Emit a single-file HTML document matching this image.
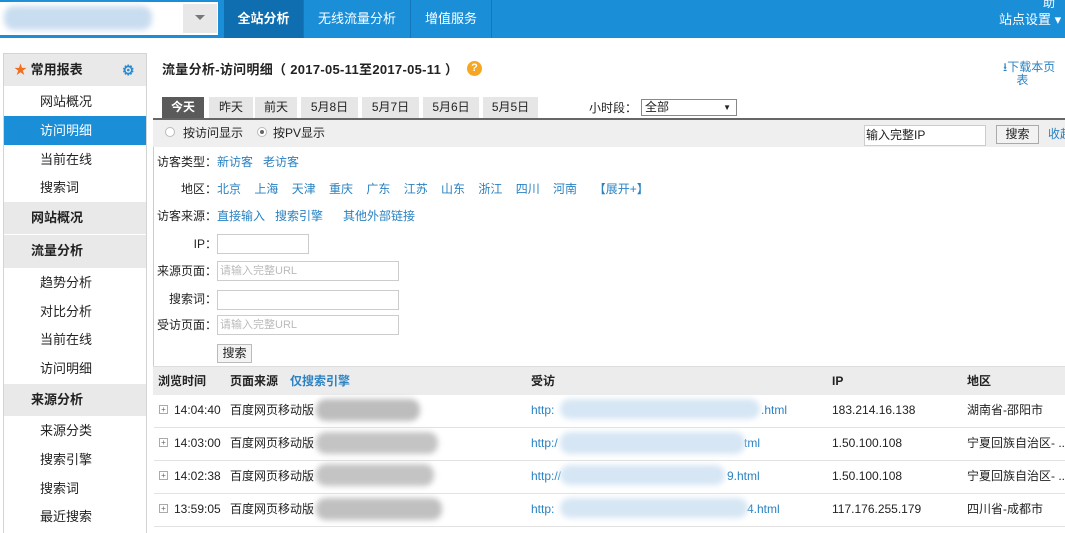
<!DOCTYPE html>
<html><head><meta charset="utf-8"><style>
*{margin:0;padding:0;box-sizing:border-box}
body{width:1065px;height:524px;overflow:hidden;background:#fff;font-family:"Liberation Sans","Noto Sans CJK SC",sans-serif;font-size:12px;color:#222;position:relative}
.a{position:absolute;white-space:nowrap}
.top{position:absolute;left:0;top:0;width:1065px;height:38px;background:#1b8ed8}
.nav{position:absolute;top:0;height:38px;line-height:37px;color:#fff;font-size:13px;text-align:center;border-right:1px solid #1577bb}
.side{position:absolute;left:3px;top:53px;width:144px;height:480px;border:1px solid #d4d4d4;border-bottom:none}
.si{position:absolute;left:0;width:142px;height:29px;line-height:29px;padding-left:36px;font-size:13px}
.sh{background:#e9e9e9;font-weight:bold;padding-left:27px;height:32px;line-height:32px}
.lnk{color:#2a82c2}
.tab{position:absolute;top:97px;height:21px;line-height:21px;background:#e6e6e6;text-align:center;font-size:12px}
.inp{position:absolute;height:20px;border:1px solid #ccc;background:#fff;color:#bbb;font-size:11px;line-height:18px;padding-left:2px}
.lbl{position:absolute;width:64px;text-align:right;left:153px;line-height:14px}
.row{position:absolute;left:154px;width:911px;height:33px;border-bottom:1px solid #e2e2e2;font-size:12px}
.row span{position:absolute;top:8px;line-height:14px}
.blur{position:absolute;border-radius:10px;filter:blur(3px)}
</style></head><body>
<div class="top"></div>
<div class="a" style="left:0;top:2px;width:218px;height:33px;background:#fff"></div>
<div class="blur" style="left:4px;top:6px;width:148px;height:24px;background:#c9ddf0"></div>
<div class="a" style="left:183px;top:4px;width:34px;height:29px;background:#e8e8e8"></div>
<div class="a" style="left:195px;top:15px;width:0;height:0;border-left:5px solid transparent;border-right:5px solid transparent;border-top:5px solid #777"></div>
<div class="nav" style="left:224px;width:80px;background:#0f6eaf;font-weight:bold">全站分析</div>
<div class="nav" style="left:304px;width:107px">无线流量分析</div>
<div class="nav" style="left:411px;width:81px">增值服务</div>
<div class="a" style="left:1043px;top:-6px;color:#fff;font-size:12px">助</div>
<div class="a" style="left:999px;top:9px;color:#fff;font-size:13px">站点设置 ▾</div>

<div class="side">
<div class="si sh" style="top:0;padding-left:10px"><span style="color:#f07020">★</span> 常用报表<span style="position:absolute;left:118px;color:#2a8ad0;font-size:14px">⚙</span></div>
<div class="si" style="top:33px">网站概况</div>
<div class="si" style="top:62px;background:#1b8ed8;color:#fff">访问明细</div>
<div class="si" style="top:91px">当前在线</div>
<div class="si" style="top:119px">搜索词</div>
<div class="si sh" style="top:148px">网站概况</div>
<div class="si sh" style="top:181px;height:33px">流量分析</div>
<div class="si" style="top:214px">趋势分析</div>
<div class="si" style="top:243px">对比分析</div>
<div class="si" style="top:271px">当前在线</div>
<div class="si" style="top:300px">访问明细</div>
<div class="si sh" style="top:330px">来源分析</div>
<div class="si" style="top:362px">来源分类</div>
<div class="si" style="top:391px">搜索引擎</div>
<div class="si" style="top:420px">搜索词</div>
<div class="si" style="top:448px">最近搜索</div>
</div>

<div class="a" style="left:162px;top:59px;font-size:13px;font-weight:bold;letter-spacing:0.3px">流量分析-访问明细（ 2017-05-11至2017-05-11 ）</div>
<div class="a" style="left:467px;top:61px;width:15px;height:15px;border-radius:50%;background:#f5a623;color:#fff;font-size:11px;text-align:center;line-height:15px;font-weight:bold">?</div>
<div class="a lnk" style="left:1003px;top:61px;font-size:12px;line-height:13px">⭳下载本页<br>&nbsp;&nbsp;&nbsp;&nbsp;表</div>

<div class="tab" style="left:162px;width:42px;background:#5a5a5a;color:#fff;font-weight:bold">今天</div>
<div class="tab" style="left:209px;width:44px">昨天</div>
<div class="tab" style="left:255px;width:42px">前天</div>
<div class="tab" style="left:301px;width:57px">5月8日</div>
<div class="tab" style="left:362px;width:57px">5月7日</div>
<div class="tab" style="left:423px;width:56px">5月6日</div>
<div class="tab" style="left:483px;width:55px">5月5日</div>
<div class="a" style="left:589px;top:99px">小时段：</div>
<div class="a" style="left:641px;top:99px;width:96px;height:17px;border:1px solid #888;background:#fff;line-height:15px;padding-left:3px">全部<span style="position:absolute;right:5px;font-size:8px">▼</span></div>

<div class="a" style="left:153px;top:118px;width:912px;height:29px;background:#efefef;border-top:2px solid #666"></div>
<div class="a" style="left:165px;top:127px;width:10px;height:10px;border-radius:50%;border:1px solid #bbb;background:#fff"></div>
<div class="a" style="left:183px;top:126px;line-height:14px">按访问显示</div>
<div class="a" style="left:257px;top:127px;width:10px;height:10px;border-radius:50%;border:1px solid #bbb;background:#fff"><div style="margin:2px;width:4px;height:4px;border-radius:50%;background:#666"></div></div>
<div class="a" style="left:273px;top:126px;line-height:14px">按PV显示</div>
<div class="a" style="left:864px;top:125px;width:122px;height:21px;border:1px solid #ccc;background:#fff;line-height:19px;padding-left:1px">输入完整IP</div>
<div class="a" style="left:996px;top:125px;width:43px;height:19px;border:1px solid #aaa;background:#f2f2f2;text-align:center;line-height:17px">搜索</div>
<div class="a lnk" style="left:1048px;top:127px;line-height:14px">收起</div>

<div class="a" style="left:153px;top:147px;width:1px;height:220px;background:#ccc"></div>
<div class="a" style="left:157px;top:155px;line-height:14px">访客类型：<span class="lnk">新访客</span>&nbsp;&nbsp;&nbsp;<span class="lnk">老访客</span></div>
<div class="a" style="left:181px;top:182px;line-height:14px">地区：<span class="lnk">北京&nbsp;&nbsp;&nbsp;&nbsp;上海&nbsp;&nbsp;&nbsp;&nbsp;天津&nbsp;&nbsp;&nbsp;&nbsp;重庆&nbsp;&nbsp;&nbsp;&nbsp;广东&nbsp;&nbsp;&nbsp;&nbsp;江苏&nbsp;&nbsp;&nbsp;&nbsp;山东&nbsp;&nbsp;&nbsp;&nbsp;浙江&nbsp;&nbsp;&nbsp;&nbsp;四川&nbsp;&nbsp;&nbsp;&nbsp;河南&nbsp;&nbsp;&nbsp;&nbsp;&nbsp;【展开+】</span></div>
<div class="a" style="left:157px;top:209px;line-height:14px">访客来源：<span class="lnk">直接输入&nbsp;&nbsp;&nbsp;搜索引擎&nbsp;&nbsp;&nbsp;&nbsp;&nbsp;&nbsp;其他外部链接</span></div>
<div class="lbl" style="top:237px">IP：</div>
<div class="inp" style="left:217px;top:234px;width:92px"></div>
<div class="lbl" style="top:264px">来源页面：</div>
<div class="inp" style="left:217px;top:261px;width:182px">请输入完整URL</div>
<div class="lbl" style="top:292px">搜索词：</div>
<div class="inp" style="left:217px;top:290px;width:182px"></div>
<div class="lbl" style="top:318px">受访页面：</div>
<div class="inp" style="left:217px;top:315px;width:182px">请输入完整URL</div>
<div class="a" style="left:217px;top:344px;width:35px;height:19px;border:1px solid #bbb;background:#f4f4f4;text-align:center;line-height:17px">搜索</div>

<div class="a" style="left:153px;top:366px;width:912px;height:29px;background:#ececec;border-top:1px solid #ddd;font-weight:bold;line-height:28px">
<span class="a" style="left:5px">浏览时间</span><span class="a" style="left:77px">页面来源</span><span class="a lnk" style="left:137px">仅搜索引擎</span><span class="a" style="left:378px">受访</span><span class="a" style="left:679px">IP</span><span class="a" style="left:814px">地区</span></div>

<div class="row" style="top:395px"><span style="left:5px;top:10px;width:9px;height:9px;border:1px solid #aaa;font-size:8px;line-height:7px;text-align:center;color:#666">+</span><span style="left:20px">14:04:40</span><span style="left:76px">百度网页移动版</span><span class="lnk" style="left:377px">http:</span><span class="lnk" style="left:607px">.html</span><span style="left:678px">183.214.16.138</span><span style="left:813px">湖南省-邵阳市</span></div>
<div class="row" style="top:428px"><span style="left:5px;top:10px;width:9px;height:9px;border:1px solid #aaa;font-size:8px;line-height:7px;text-align:center;color:#666">+</span><span style="left:20px">14:03:00</span><span style="left:76px">百度网页移动版</span><span class="lnk" style="left:377px">http:/</span><span class="lnk" style="left:590px">tml</span><span style="left:678px">1.50.100.108</span><span style="left:813px">宁夏回族自治区- ..</span></div>
<div class="row" style="top:461px"><span style="left:5px;top:10px;width:9px;height:9px;border:1px solid #aaa;font-size:8px;line-height:7px;text-align:center;color:#666">+</span><span style="left:20px">14:02:38</span><span style="left:76px">百度网页移动版</span><span class="lnk" style="left:377px">http://</span><span class="lnk" style="left:573px">9.html</span><span style="left:678px">1.50.100.108</span><span style="left:813px">宁夏回族自治区- ..</span></div>
<div class="row" style="top:494px"><span style="left:5px;top:10px;width:9px;height:9px;border:1px solid #aaa;font-size:8px;line-height:7px;text-align:center;color:#666">+</span><span style="left:20px">13:59:05</span><span style="left:76px">百度网页移动版</span><span class="lnk" style="left:377px">http:</span><span class="lnk" style="left:593px">4.html</span><span style="left:678px">117.176.255.179</span><span style="left:813px">四川省-成都市</span></div>

<div class="blur" style="left:316px;top:399px;width:104px;height:22px;background:#bdbdbd"></div>
<div class="blur" style="left:316px;top:432px;width:122px;height:22px;background:#c4c4c4"></div>
<div class="blur" style="left:316px;top:464px;width:118px;height:22px;background:#c4c4c4"></div>
<div class="blur" style="left:316px;top:498px;width:126px;height:22px;background:#c0c0c0"></div>
<div class="blur" style="left:560px;top:399px;width:200px;height:20px;background:#d6e6f4"></div>
<div class="blur" style="left:560px;top:432px;width:185px;height:22px;background:#d6e6f4"></div>
<div class="blur" style="left:560px;top:465px;width:165px;height:20px;background:#d6e6f4"></div>
<div class="blur" style="left:560px;top:498px;width:188px;height:20px;background:#d6e6f4"></div>
</body></html>
